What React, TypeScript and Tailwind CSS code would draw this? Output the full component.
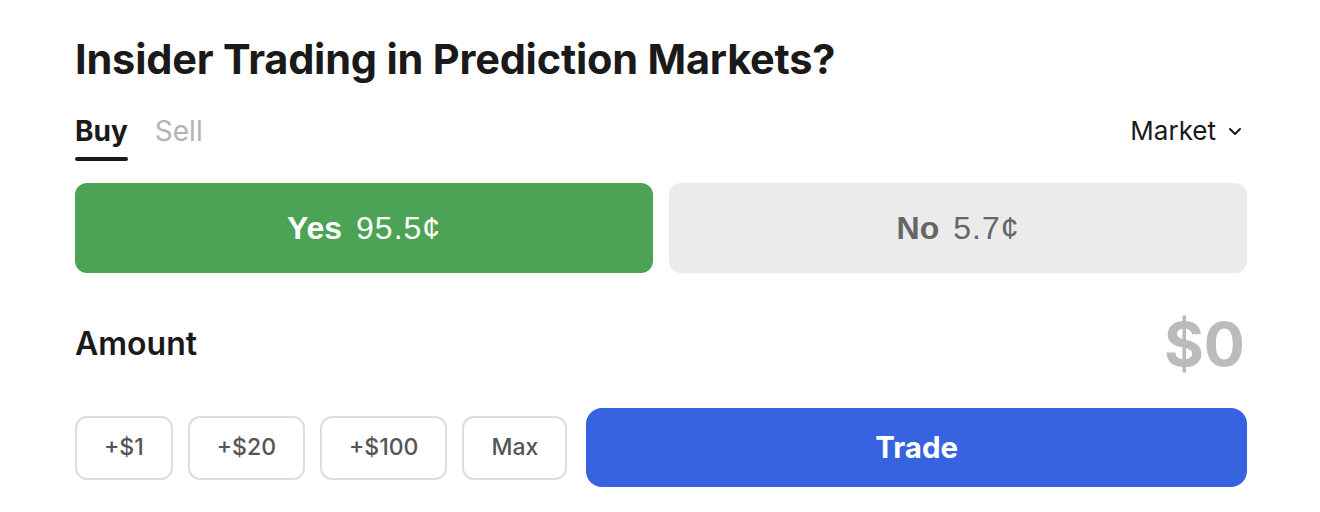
import React, { useState } from 'react';

const chips = ['+$1', '+$20', '+$100', 'Max'];

export default function App() {
  const [side, setSide] = useState<'buy' | 'sell'>('buy');
  const [outcome, setOutcome] = useState<'yes' | 'no'>('yes');
  const [amount, setAmount] = useState(0);

  return (
    <div className="w-[1320px] h-[512px] bg-white pl-[75px] pr-[73px] pt-[35px] font-['Inter',sans-serif] text-[#1a1a1a]">
      {/* Title */}
      <h1 className="text-[41.5px] leading-[48px] font-bold tracking-[-0.2px]">
        Insider Trading in Prediction Markets?
      </h1>

      {/* Tabs + order type */}
      <div className="mt-[32px] flex items-start justify-between">
        <div className="flex gap-[27px]">
          <button
            onClick={() => setSide('buy')}
            className="flex flex-col items-start"
          >
            <span className={`text-[28px] leading-[32px] ${side === 'buy' ? 'font-bold text-[#1a1a1a]' : 'text-[#b3b3b3]'}`}>Buy</span>
            <span className={`mt-[10px] h-[4px] w-full rounded-full ${side === 'buy' ? 'bg-[#1a1a1a]' : 'bg-transparent'}`} />
          </button>
          <button
            onClick={() => setSide('sell')}
            className="flex flex-col items-start"
          >
            <span className={`text-[28px] leading-[32px] ${side === 'sell' ? 'font-bold text-[#1a1a1a]' : 'text-[#b3b3b3]'}`}>Sell</span>
            <span className={`mt-[10px] h-[4px] w-full rounded-full ${side === 'sell' ? 'bg-[#1a1a1a]' : 'bg-transparent'}`} />
          </button>
        </div>
        <button className="flex items-center gap-[12px] text-[26px] leading-[32px] pr-[5px]">
          Market
          <svg width="14" height="9" viewBox="0 0 14 9" fill="none">
            <path d="M2 2l5 5 5-5" stroke="#1a1a1a" strokeWidth="2" strokeLinecap="round" strokeLinejoin="round" />
          </svg>
        </button>
      </div>

      {/* Yes / No */}
      <div className="mt-[22px] grid grid-cols-2 gap-[16px] font-['Liberation_Sans',Arial,sans-serif]">
        <button
          onClick={() => setOutcome('yes')}
          className={`h-[90px] rounded-[12px] flex items-center justify-center gap-[14px] text-[32px] ${outcome === 'yes' ? 'bg-[#4ca255] text-white' : 'bg-[#ebebeb] text-[#666666]'}`}
        >
          <span className="font-bold">Yes</span>
          <span className="tracking-[1px]">95.5¢</span>
        </button>
        <button
          onClick={() => setOutcome('no')}
          className={`h-[90px] rounded-[12px] flex items-center justify-center gap-[14px] text-[32px] ${outcome === 'no' ? 'bg-[#e0504f] text-white' : 'bg-[#ebebeb] text-[#666666]'}`}
        >
          <span className="font-bold">No</span>
          <span className="tracking-[1px]">5.7¢</span>
        </button>
      </div>

      {/* Amount */}
      <div className="mt-[39px] flex items-center justify-between">
        <span className="text-[32px] font-semibold">Amount</span>
        <span className="text-[61px] leading-[64px] font-bold text-[#bbbbbb] pr-[2px]">${amount}</span>
      </div>

      {/* Quick add + trade */}
      <div className="mt-[32px] flex items-center gap-[15px]">
        {chips.map((c) => (
          <button
            key={c}
            onClick={() => {
              if (c === 'Max') return;
              setAmount((a) => a + Number(c.replace('+$', '')));
            }}
            className="h-[64px] px-[27px] rounded-[12px] border-2 border-[#dddddd] text-[23px] font-medium text-[#555555]"
          >
            {c}
          </button>
        ))}
        <button className="ml-[4px] flex-1 h-[79px] rounded-[16px] bg-[#3762e0] text-white text-[29.5px] font-bold">
          Trade
        </button>
      </div>
    </div>
  );
}
